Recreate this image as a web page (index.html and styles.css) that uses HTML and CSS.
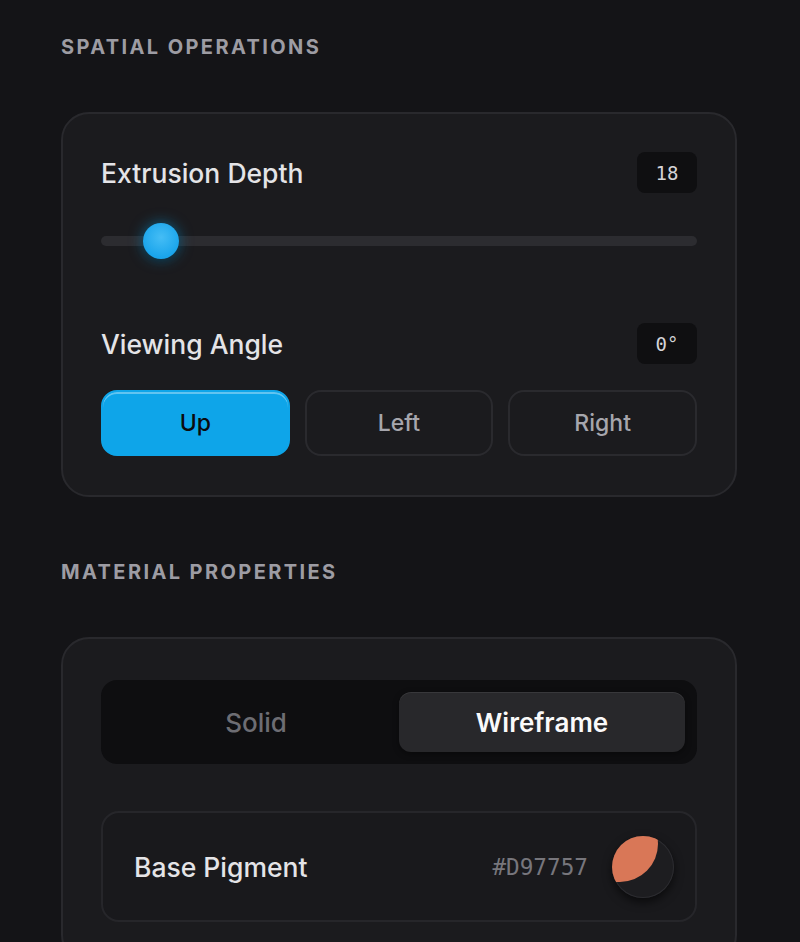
FILE: index.html
```html
<!DOCTYPE html>
<html lang="en">
<head>
    <meta charset="UTF-8">
    <meta name="viewport" content="width=device-width, initial-scale=1.0">
    <title>Geometry Controls</title>
    <link rel="stylesheet" href="styles.css">
</head>
<body>
    <div class="panel">
        <!-- Spatial operations -->
        <h2 class="section-title">Spatial Operations</h2>
        <div class="card">
            <div class="field-head">
                <span class="field-label">Extrusion Depth</span>
                <span class="value-box">18</span>
            </div>
            <div class="slider">
                <div class="slider-track"></div>
                <div class="slider-thumb"></div>
            </div>

            <div class="field-head angle-head">
                <span class="field-label">Viewing Angle</span>
                <span class="value-box">0°</span>
            </div>
            <div class="angle-buttons">
                <button class="angle-btn active">Up</button>
                <button class="angle-btn">Left</button>
                <button class="angle-btn">Right</button>
            </div>
        </div>

        <!-- Material properties -->
        <h2 class="section-title">Material Properties</h2>
        <div class="card card-material">
            <div class="segmented">
                <button class="segment">Solid</button>
                <button class="segment active">Wireframe</button>
            </div>
            <div class="pigment-row">
                <span class="pigment-label">Base Pigment</span>
                <div class="pigment-right">
                    <span class="pigment-hex">#D97757</span>
                    <div class="swatch">
                        <div class="swatch-fill"></div>
                    </div>
                </div>
            </div>
        </div>
    </div>
</body>
</html>
```

FILE: styles.css
```css
body {
    background-color: #141417;
    font-family: Inter, "Noto Sans", sans-serif;
    color: #e4e4e7;
    margin: 0;
    padding: 0;
}
.panel {
    padding: 36px 63px 0 61px;
}
.section-title {
    margin: 0 0 54px 0;
    font-size: 20px;
    font-weight: 700;
    letter-spacing: 2.4px;
    text-transform: uppercase;
    color: #9d9ca3;
    line-height: 22px;
}
.card {
    background-color: #1b1b1e;
    border: 2px solid #29292d;
    border-radius: 28px;
    padding: 38px 38px 39px 38px;
    margin-bottom: 64px;
}
.field-head {
    display: flex;
    justify-content: space-between;
    align-items: center;
}
.field-label {
    font-size: 26.5px;
    font-weight: 500;
    color: #e4e4e7;
}
.value-box {
    background-color: #0f0f11;
    border-radius: 8px;
    width: 60px;
    height: 41px;
    display: flex;
    align-items: center;
    justify-content: center;
    font-family: "DejaVu Sans Mono", monospace;
    font-size: 19px;
    color: #d4d4d8;
}
.slider {
    position: relative;
    height: 40px;
    margin: 28px 0 62px 0;
    display: flex;
    align-items: center;
}
.slider-track {
    width: 100%;
    height: 10px;
    border-radius: 5px;
    background-color: #2c2c30;
}
.slider-thumb {
    position: absolute;
    left: 42px;
    top: 2px;
    width: 36px;
    height: 36px;
    border-radius: 50%;
    background: radial-gradient(circle at 50% 40%, #45bdf5, #1aa5ec 70%);
    box-shadow: 0 0 14px rgba(14, 165, 233, 0.55), 0 2px 6px rgba(0, 0, 0, 0.5);
}
.angle-head {
    margin-bottom: 26px;
}
.angle-buttons {
    display: grid;
    grid-template-columns: 1fr 1fr 1fr;
    gap: 15px;
}
.angle-btn {
    height: 66px;
    border-radius: 16px;
    border: 2px solid #2a2a2e;
    background-color: transparent;
    color: #a6a6ad;
    font-family: Inter, "Noto Sans", sans-serif;
    font-size: 23px;
    font-weight: 500;
}
.angle-btn.active {
    background-color: #0ea5e9;
    border-color: #0ea5e9;
    color: #0b0b0d;
    box-shadow: inset 0 2px 0 rgba(255, 255, 255, 0.35);
}
.card-material {
    padding-top: 41px;
}
.segmented {
    display: grid;
    grid-template-columns: 1fr 1fr;
    background-color: #0e0e10;
    border-radius: 16px;
    padding: 12px;
    margin-bottom: 47px;
}
.segment {
    height: 60px;
    border: none;
    border-radius: 12px;
    background-color: transparent;
    color: #6d6d73;
    font-family: Inter, "Noto Sans", sans-serif;
    font-size: 26px;
    font-weight: 500;
}
.segment.active {
    background-color: #28282b;
    color: #fafafa;
    font-weight: 600;
    box-shadow: inset 0 1px 0 rgba(255, 255, 255, 0.08), 0 2px 6px rgba(0, 0, 0, 0.4);
}
.pigment-row {
    display: flex;
    justify-content: space-between;
    align-items: center;
    height: 107px;
    border: 2px solid #26262a;
    border-radius: 18px;
    background-color: #19191c;
    padding: 0 21px 0 31px;
}
.pigment-label {
    font-size: 26.5px;
    font-weight: 500;
    color: #e4e4e7;
}
.pigment-right {
    display: flex;
    align-items: center;
    gap: 24px;
}
.pigment-hex {
    font-family: "DejaVu Sans Mono", monospace;
    font-size: 22.7px;
    color: #77767c;
}
.swatch {
    position: relative;
    width: 62px;
    height: 62px;
    border-radius: 50%;
    overflow: hidden;
    background-color: #1d1d20;
    box-shadow: 0 4px 10px rgba(0, 0, 0, 0.6), inset 0 0 0 1px #2c2c30;
}
.swatch-fill {
    position: absolute;
    left: -30px;
    top: -30px;
    width: 76px;
    height: 76px;
    border-radius: 50%;
    background-color: #d97757;
}
```
